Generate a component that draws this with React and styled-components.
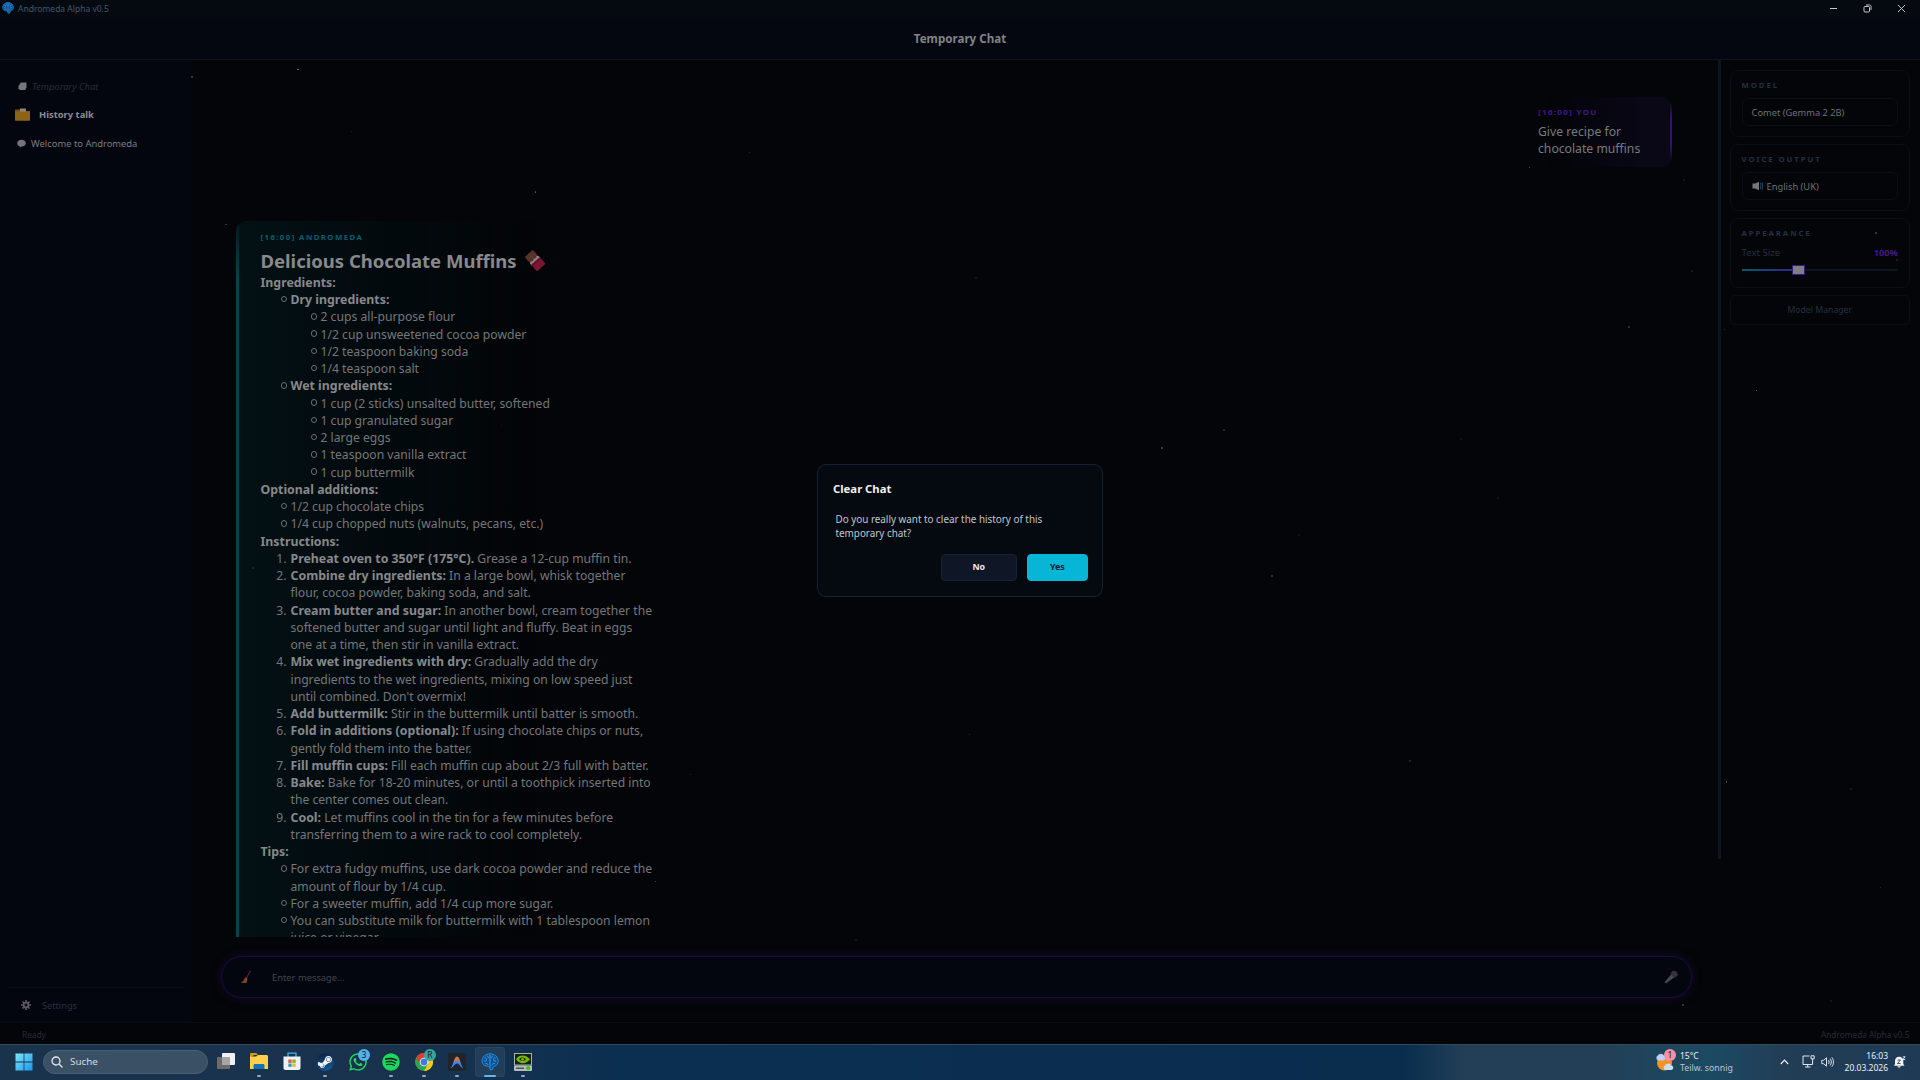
import React from "react";
import styled, { createGlobalStyle } from "styled-components";
import { FaWhatsapp, FaSpotify, FaSteamSymbol } from "react-icons/fa";

const GlobalStyle = createGlobalStyle`
  * {
    box-sizing: border-box;
  }
  body {
    margin: 0;
    background: #030508;
    font-family: "Noto Sans", "Open Sans", sans-serif;
    overflow: hidden;
  }
  svg {
    display: block;
    flex: none;
  }
`;

const Screen = styled.div`
  position: relative;
  width: 1920px;
  height: 1080px;
  display: flex;
  flex-direction: column;
  background: #030508;
  white-space: nowrap;
`;

// window title bar
const TitleBar = styled.div`
  height: 17px;
  display: flex;
  align-items: center;
  padding: 0 14px 1px 2px;
  gap: 4px;
  background: #050a11;
  color: #46546e;
  font-size: 8.5px;
`;

const WindowButtons = styled.div`
  margin-left: auto;
  display: flex;
  align-items: center;
  gap: 25px;
  color: #c6c8cb;
`;

const Header = styled.div`
  height: 43px;
  display: flex;
  align-items: center;
  justify-content: center;
  border-bottom: 1px solid #0b111d;
  background: #04070f;
  color: #808389;
  font-size: 11.6px;
  font-weight: 700;
`;

const Body = styled.div`
  flex: 1;
  min-height: 0;
  display: flex;
`;

// sidebar
const Sidebar = styled.div`
  width: 191px;
  display: flex;
  flex-direction: column;
  background: #04060f;
  padding: 12px 8px 0;
`;

const ChatItem = styled.div`
  height: 28.5px;
  display: flex;
  align-items: center;
  gap: ${(p) => p.$gap || 5}px;
  padding-left: ${(p) => p.$indent || 10}px;
  color: ${(p) => p.$color || "#7a7d81"};
  font-size: 9.4px;
  font-style: ${(p) => (p.$italic ? "italic" : "normal")};
  font-weight: ${(p) => (p.$bold ? 700 : 400)};
`;

const SidebarFooter = styled.div`
  margin-top: auto;
  height: 35px;
  display: flex;
  align-items: center;
  gap: 11px;
  padding-left: 13px;
  border-top: 1px solid #080e18;
  color: #253040;
  font-size: 9.2px;
`;

// chat
const ChatColumn = styled.div`
  flex: 1;
  min-width: 0;
  display: flex;
  flex-direction: column;
`;

const Messages = styled.div`
  height: 877px;
  overflow: hidden;
  display: flex;
  flex-direction: column;
  padding: 37px 46px 0 45px;
  gap: 54px;
`;

const UserBubble = styled.div`
  align-self: flex-end;
  flex: none;
  width: 156px;
  height: 70px;
  padding: 6px 22px;
  border-radius: 10px;
  background: linear-gradient(180deg, rgba(53, 19, 106, 0) 5%, #35136a 30%, #35136a 70%, rgba(53, 19, 106, 0) 92%)
      right / 2px 100% no-repeat,
    linear-gradient(90deg, rgba(11, 7, 24, 0) 20%, #0a0716 80%);
  color: #797b7e;
  font-size: 12.2px;
  line-height: 17.25px;
`;

const BotBubble = styled.div`
  flex: none;
  width: 440px;
  height: 760px;
  padding: 7px 0 0 24.5px;
  border-radius: 10px;
  background: linear-gradient(180deg, rgba(4, 70, 80, 0.15), #044650 60px) left / 3px 100% no-repeat,
    linear-gradient(90deg, #031114 0%, #030b0f 28%, rgba(3, 5, 8, 0) 68%);
  color: #757779;
  font-size: 12.16px;
  line-height: 17.25px;

  b {
    color: #86888b;
    font-weight: 700;
    font-size: 12.35px;
  }
`;

const Sender = styled.div`
  height: ${(p) => p.$height || 18}px;
  line-height: 18px;
  font-size: 7.8px;
  font-weight: 700;
  letter-spacing: 1.42px;
  color: ${(p) => p.$color};
`;

const RecipeTitle = styled.div`
  display: flex;
  align-items: center;
  gap: 8.5px;
  height: 27.8px;
  padding-top: 1px;
  font-size: 18.5px;
  font-weight: 700;
  color: #87898c;
`;

const Line = styled.div`
  display: flex;
  align-items: center;
  height: 17.25px;
  padding-left: ${(p) => p.$level * 30}px;
  white-space: pre;
`;

// marker hangs in the 30px indent of its line
const Marker = styled.span`
  width: 30px;
  margin-left: -30px;
  padding-right: ${(p) => (p.$number ? 4 : 3.5)}px;
  display: flex;
  justify-content: flex-end;
`;

const Ring = styled.span`
  width: 6.5px;
  height: 6.5px;
  margin-top: -1px;
  border: 1px solid #6c6e71;
  border-radius: 50%;
`;

const Composer = styled.div`
  height: 42px;
  margin: 18.5px 26px 0 30px;
  display: flex;
  align-items: center;
  padding: 1px 13.5px 0 18px;
  border: 1px solid #1c0b39;
  border-radius: 21px;
  background: #04060f;
  box-shadow: 0 0 10px 1px #150829;
  color: #414449;
  font-size: 9.35px;
  gap: 20px;

  svg:last-child {
    margin-left: auto;
  }
`;

const Splitter = styled.div`
  width: 3px;
  height: 799px;
  background: #0c1520;
`;

// settings panel
const Panel = styled.div`
  width: 199px;
  display: flex;
  flex-direction: column;
  gap: 7.5px;
  padding: 10px 10.5px 0 9px;
`;

const Card = styled.div`
  height: ${(p) => p.$height || 66.5}px;
  border: 1px solid #090f18;
  border-radius: 9px;
  padding: 6px 10.5px 0;
`;

const CardLabel = styled.div`
  height: 17px;
  line-height: 16px;
  color: #253042;
  font-size: 7.8px;
  font-weight: 700;
  letter-spacing: 1.9px;
`;

const Select = styled.div`
  height: 28px;
  margin-top: 3.5px;
  display: flex;
  align-items: center;
  gap: 4px;
  padding: 1px 9px 0;
  border: 1px solid #090f18;
  border-radius: 6px;
  color: #6f7175;
  font-size: 9.3px;
`;

const SliderRow = styled.div`
  display: flex;
  justify-content: space-between;
  align-items: center;
  height: 21px;
  color: #253041;
  font-size: 9.6px;
`;

const Percent = styled.span`
  color: #42198a;
  font-weight: 700;
  font-size: 9.3px;
`;

const Track = styled.div`
  display: flex;
  align-items: center;
  height: 12px;
  margin-top: 0.5px;
`;

const TrackFill = styled.div`
  width: 50px;
  height: 2px;
  background: linear-gradient(90deg, #04596a, #34268a);
`;

const Thumb = styled.div`
  width: 13px;
  height: 10px;
  border: 1px solid #3c1780;
  background: #7d7f82;
`;

const TrackRest = styled.div`
  flex: 1;
  height: 2px;
  background: #0c1420;
`;

const ManagerButton = styled.div`
  height: 30px;
  display: flex;
  align-items: center;
  justify-content: center;
  border: 1px solid #090f18;
  border-radius: 5px;
  color: #253041;
  font-size: 8.7px;
`;

const StatusBar = styled.div`
  height: 22px;
  display: flex;
  align-items: center;
  justify-content: space-between;
  padding: 1px 10.5px 0 22px;
  border-top: 1px solid #090d12;
  color: #232c3a;
  font-size: 8.3px;
`;

const Star = styled.div`
  position: absolute;
  left: ${(p) => p.$x}px;
  top: ${(p) => p.$y}px;
  width: 1.5px;
  height: 1.5px;
  border-radius: 50%;
  background: rgba(190, 195, 200, ${(p) => p.$a * 0.75});
`;

// dialog over the dimmed window
const Dialog = styled.div`
  position: absolute;
  left: 817px;
  top: 464px;
  width: 286px;
  height: 133px;
  display: flex;
  flex-direction: column;
  padding: 15px 14.5px 15px 15px;
  border: 1px solid #152136;
  border-radius: 9px;
  background: #050a11;
`;

const DialogTitle = styled.div`
  height: 18px;
  line-height: 18px;
  color: #eef0f3;
  font-size: 11.3px;
  font-weight: 700;
`;

const DialogText = styled.div`
  margin: 14px 0 0 2.5px;
  color: #c2c6cc;
  font-size: 9.87px;
  line-height: 14.3px;
`;

const DialogButtons = styled.div`
  display: flex;
  justify-content: flex-end;
  gap: 10.5px;
  margin-top: 13.4px;
`;

const DialogButton = styled.div`
  width: ${(p) => (p.$primary ? 60.5 : 75.5)}px;
  height: 27px;
  display: flex;
  align-items: center;
  justify-content: center;
  border: 1px solid ${(p) => (p.$primary ? "#07b5d6" : "#182235")};
  border-radius: 4px;
  background: ${(p) => (p.$primary ? "#07b5d6" : "#0f1626")};
  color: ${(p) => (p.$primary ? "#03202b" : "#e9ebef")};
  font-size: 8.8px;
  font-weight: 700;
`;

// windows taskbar
const Taskbar = styled.div`
  height: 36px;
  display: flex;
  align-items: center;
  padding: 0 14px 1.5px 15px;
  border-top: 1px solid #33485a;
  background: linear-gradient(
    90deg,
    #1a334d 0,
    #18324e 430px,
    #0b2f50 620px,
    #0a2d4e 1405px,
    #223f57 1465px,
    #223f57 1600px,
    #1b4a62 1710px,
    #223e57 1780px,
    #1f3a54 1920px
  );
`;

const SearchBox = styled.div`
  width: 165px;
  height: 24px;
  margin: 0 1px 0 10px;
  display: flex;
  align-items: center;
  gap: 7px;
  padding-left: 7px;
  border: 1px solid #4a5f73;
  border-radius: 12px;
  background: #3a5065;
  color: #d6dce2;
  font-size: 9.8px;
`;

const AppSlot = styled.div`
  position: relative;
  width: 33px;
  height: 34px;
  display: flex;
  align-items: center;
  justify-content: center;
`;

const ActiveTile = styled.div`
  width: 30px;
  height: 30px;
  display: flex;
  align-items: center;
  justify-content: center;
  border: 1px solid #29445e;
  border-radius: 3px;
  background: #213d58;
`;

const Running = styled.div`
  position: absolute;
  left: 50%;
  bottom: 2px;
  width: ${(p) => (p.$active ? 12 : 4)}px;
  height: 2px;
  transform: translateX(-50%);
  border-radius: 1px;
  background: ${(p) => (p.$active ? "#62b6f5" : "#9aa7b3")};
`;

const Badge = styled.div`
  position: absolute;
  right: ${(p) => p.$right}px;
  top: ${(p) => p.$top}px;
  width: 12px;
  height: 12px;
  border-radius: 50%;
  background: ${(p) => p.$color};
  color: #10202c;
  font-size: 8.5px;
  line-height: 12px;
  text-align: center;
`;

const Tray = styled.div`
  margin-left: auto;
  display: flex;
  align-items: center;
  color: #eef1f4;
  font-size: 8.5px;
  line-height: 12px;
`;

const Weather = styled.div`
  position: relative;
  display: flex;
  align-items: center;
  gap: 5px;
  width: 125px;
`;

const WeatherSub = styled.div`
  color: #b9c5cf;
  font-size: 8.75px;
`;

const TrayIcons = styled.div`
  display: flex;
  align-items: center;
  gap: 6px;
  width: 65px;

  svg:first-child {
    margin-right: 7px;
  }
`;

const Clock = styled.div`
  width: 43px;
  margin-right: 6px;
  display: flex;
  flex-direction: column;
  align-items: flex-end;
`;

const recipe = [
  { level: 0, bold: "Ingredients:" },
  { level: 1, mark: "o", bold: "Dry ingredients:" },
  { level: 2, mark: "o", text: "2 cups all-purpose flour" },
  { level: 2, mark: "o", text: "1/2 cup unsweetened cocoa powder" },
  { level: 2, mark: "o", text: "1/2 teaspoon baking soda" },
  { level: 2, mark: "o", text: "1/4 teaspoon salt" },
  { level: 1, mark: "o", bold: "Wet ingredients:" },
  { level: 2, mark: "o", text: "1 cup (2 sticks) unsalted butter, softened" },
  { level: 2, mark: "o", text: "1 cup granulated sugar" },
  { level: 2, mark: "o", text: "2 large eggs" },
  { level: 2, mark: "o", text: "1 teaspoon vanilla extract" },
  { level: 2, mark: "o", text: "1 cup buttermilk" },
  { level: 0, bold: "Optional additions:" },
  { level: 1, mark: "o", text: "1/2 cup chocolate chips" },
  { level: 1, mark: "o", text: "1/4 cup chopped nuts (walnuts, pecans, etc.)" },
  { level: 0, bold: "Instructions:" },
  { level: 1, mark: "1.", bold: "Preheat oven to 350°F (175°C).", text: " Grease a 12-cup muffin tin." },
  { level: 1, mark: "2.", bold: "Combine dry ingredients:", text: " In a large bowl, whisk together" },
  { level: 1, text: "flour, cocoa powder, baking soda, and salt." },
  { level: 1, mark: "3.", bold: "Cream butter and sugar:", text: " In another bowl, cream together the" },
  { level: 1, text: "softened butter and sugar until light and fluffy. Beat in eggs" },
  { level: 1, text: "one at a time, then stir in vanilla extract." },
  { level: 1, mark: "4.", bold: "Mix wet ingredients with dry:", text: " Gradually add the dry" },
  { level: 1, text: "ingredients to the wet ingredients, mixing on low speed just" },
  { level: 1, text: "until combined. Don't overmix!" },
  { level: 1, mark: "5.", bold: "Add buttermilk:", text: " Stir in the buttermilk until batter is smooth." },
  { level: 1, mark: "6.", bold: "Fold in additions (optional):", text: " If using chocolate chips or nuts," },
  { level: 1, text: "gently fold them into the batter." },
  { level: 1, mark: "7.", bold: "Fill muffin cups:", text: " Fill each muffin cup about 2/3 full with batter." },
  { level: 1, mark: "8.", bold: "Bake:", text: " Bake for 18-20 minutes, or until a toothpick inserted into" },
  { level: 1, text: "the center comes out clean." },
  { level: 1, mark: "9.", bold: "Cool:", text: " Let muffins cool in the tin for a few minutes before" },
  { level: 1, text: "transferring them to a wire rack to cool completely." },
  { level: 0, bold: "Tips:" },
  { level: 1, mark: "o", text: "For extra fudgy muffins, use dark cocoa powder and reduce the" },
  { level: 1, text: "amount of flour by 1/4 cup." },
  { level: 1, mark: "o", text: "For a sweeter muffin, add 1/4 cup more sugar." },
  { level: 1, mark: "o", text: "You can substitute milk for buttermilk with 1 tablespoon lemon" },
  { level: 1, text: "juice or vinegar." },
];

// x, y, opacity
const stars = [
  [297, 68.5, 0.8], [191, 76, 0.45], [350.5, 130.5, 0.25], [225, 223.5, 0.4],
  [534.5, 191, 0.6], [748.5, 151.5, 0.3], [1528.5, 166.5, 0.6], [1683, 179, 0.15],
  [1691, 270, 0.15], [1628, 326, 0.35], [1723.5, 328.5, 0.35], [1875, 232, 0.4],
  [1896, 259, 0.2], [1755.5, 389.5, 0.8], [1161, 447, 0.5], [1223, 429, 0.3],
  [1271, 575, 0.35], [968.5, 733.5, 0.3], [689.5, 773.5, 0.25], [654.5, 880.5, 0.6],
  [252, 567, 0.2], [500.5, 424.5, 0.2], [1725.5, 781, 0.5], [1850, 788, 0.15],
  [1879.5, 886.5, 0.3], [1682, 1004, 0.4], [1830, 1000, 0.12], [1460, 438, 0.12],
  [1497, 497, 0.12], [1409, 760, 0.25], [855, 939, 0.15], [975, 277, 0.15],
  [1298, 534, 0.12],
];

const BrainIcon = ({ size }) => (
  <svg width={size} height={size} viewBox="0 0 18 18">
    <path
      d="M9 .8C4.500.8 1 4 1 8c0 2.800 1.600 4.600 4 5 1.600.2 2.600.2 3.400 1.400L9.300 17l2.400-.5.5-2.800C15.300 13.200 17.200 11 17.200 8c0-4.200-3.700-7.200-8.200-7.200z"
      fill="#0e4f97"
      stroke="#1f8fd0"
      strokeWidth="1"
    />
    <path
      d="M9 1.500v13M3.500 5c1.200-.3 2 .3 2 1.500S4.500 8.500 3 8.300M5.800 3c1.300 0 1.700.8 1.500 2M4 11c1-.8 2.600-.6 3 .7M14.500 5c-1.200-.3-2 .3-2 1.500s1 2 2.500 1.800M12.200 3c-1.300 0-1.700.8-1.500 2M14 11c-1-.8-2.600-.6-3 .7"
      fill="none"
      stroke="#3fa9e6"
      strokeWidth="0.9"
    />
  </svg>
);

const BubbleIcon = ({ square }) => (
  <svg width="9" height="9" viewBox="0 0 9 9">
    {square ? (
      <path d="M2.800.6h4.700c.6 0 1 .4 1 1v3.800L7.200 8H2L.5 6.800V4z" fill="#77767d" />
    ) : (
      <path d="M4.500.8C7 .8 8.800 2.200 8.800 4.200S7 7.400 4.800 7.400L3 8.400l-.6-1.300C1 6.600.2 5.500.2 4.200.2 2.200 2 .8 4.500.8z" fill="#77727e" />
    )}
  </svg>
);

const FolderIcon = () => (
  <svg width="16" height="13" viewBox="0 0 16 13">
    <path d="M0 1.500h5L6 3h9v3H0z" fill="#7c4d0c" />
    <path d="M5 .5h6v4H5z" fill="#8a8880" />
    <path d="M0 3.500h15V12c0 .5-.3.8-.8.8H.8c-.5 0-.8-.3-.8-.8z" fill="#8c6417" />
  </svg>
);

const ChocolateIcon = () => (
  <svg width="20" height="21" viewBox="0 0 20 21">
    <g transform="rotate(-42 10 10.500)">
      <rect x="4.500" y="1" width="11" height="9" rx="1" fill="#553128" />
      <path d="M10 1v9M4.500 5.500h11" stroke="#66402f" strokeWidth=".6" />
      <path d="M4.200 9.500l2-1.200 2 1.200 2-1.200 2 1.200 2-1.200 1.600 1.200V12H4.200z" fill="#85838c" />
      <rect x="4.200" y="11" width="11.600" height="9" rx="1" fill="#7b1532" />
      <path d="M4.200 12.500h11.600" stroke="#5c0f26" strokeWidth="1" />
    </g>
  </svg>
);

const BroomIcon = () => (
  <svg width="12" height="14" viewBox="0 0 12 14">
    <path d="M10.500.8L6.500 8" stroke="#4d2a20" strokeWidth="1.200" />
    <path d="M5 7l2.400 1.400c.2 2-.6 3.900-1.200 4.600L.8 12.800C2.800 11.600 4.400 9.700 5 7z" fill="#7f4423" />
  </svg>
);

const MicIcon = () => (
  <svg width="14" height="14" viewBox="0 0 14 14">
    <path d="M.5 12.200L7 4.500l3 3L2 13.500z" fill="#4a474f" />
    <path d="M7.300 2.500L11.500 7c1.500-.4 2.200-1.500 2-3C13.200 2 11.800.7 10 .7c-1.300 0-2.300.7-2.700 1.800z" fill="#38353f" />
    <path d="M7 3.300L10.800 7.500" stroke="#625f67" strokeWidth="1" />
  </svg>
);

const GearIcon = () => (
  <svg width="10" height="10" viewBox="0 0 10 10">
    <path d="M5 0v10M0 5h10M1.500 1.500l7 7M8.500 1.500l-7 7" stroke="#5b5663" strokeWidth="1.700" />
    <circle cx="5" cy="5" r="2.400" fill="#04060f" stroke="#5b5663" strokeWidth="1.900" />
  </svg>
);

const SpeakerIcon = () => (
  <svg width="11" height="10" viewBox="0 0 11 10">
    <path d="M.5 2.500H3L7 .8v8.400L3 7.500H.5z" fill="#77757c" />
    <path d="M8.300 2c.8 1.800.8 4.200 0 6M9.800 1.200c1 2.200 1 5.400 0 7.600" stroke="#1d3f66" fill="none" strokeWidth="1.100" />
  </svg>
);

const WindowsIcon = () => (
  <svg width="18" height="18" viewBox="0 0 18 18">
    <defs>
      <linearGradient id="win" x1="0" y1="0" x2="1" y2="1">
        <stop offset="0" stopColor="#7ee6fb" />
        <stop offset="1" stopColor="#1b96ea" />
      </linearGradient>
    </defs>
    <path d="M.5.500h8.100v8.100H.5zM9.400.500h8.100v8.100H9.400zM.5 9.400h8.100v8.100H.5zM9.400 9.400h8.100v8.100H9.400z" fill="url(#win)" />
  </svg>
);

const TaskViewIcon = () => (
  <svg width="18" height="17" viewBox="0 0 18 17">
    <rect x="5" y="0" width="13" height="12" rx="1" fill="#f0f0f0" />
    <rect x="0" y="4" width="13" height="12" rx="1" fill="#6d6a67" />
    <rect x="5" y="4" width="8" height="8" fill="#a5a6a6" />
  </svg>
);

const ExplorerIcon = () => (
  <svg width="18" height="17" viewBox="0 0 18 17">
    <path d="M0 1.500C0 .6.500 0 1.300 0h5L8 2H4L0 5z" fill="#d9960f" />
    <path d="M0 3.500h6L8 2h8.500c.9 0 1.500.6 1.500 1.500V16H0z" fill="#fbd04a" />
    <path d="M3.500 16v-3.500c0-1 .6-1.500 1.500-1.500h8c1 0 1.500.6 1.500 1.500V16z" fill="#1470b8" />
  </svg>
);

const StoreIcon = () => (
  <svg width="18" height="19" viewBox="0 0 18 19">
    <path d="M5 5V1.200h8V5" fill="none" stroke="#3cb7ea" strokeWidth="1.300" />
    <path d="M.5 4.500h17V16c0 1.300-.9 2-2 2h-13c-1.200 0-2-.8-2-2z" fill="#eef2f5" />
    <path d="M5.300 7.500h3.400v3.400H5.300z" fill="#ee5a2c" />
    <path d="M9.300 7.500h3.400v3.400H9.300z" fill="#7cb92e" />
    <path d="M5.300 11.500h3.400v3.400H5.300z" fill="#1f9ee6" />
    <path d="M9.300 11.500h3.400v3.400H9.300z" fill="#fcb82a" />
  </svg>
);

const SteamDisc = styled.div`
  width: 18px;
  height: 18px;
  display: flex;
  align-items: center;
  justify-content: center;
  border-radius: 50%;
  background: linear-gradient(160deg, #101a3c, #15609c);
  color: #f2f5f7;
  font-size: 16px;
`;

const SpotifyDisc = styled.div`
  border-radius: 50%;
  background: #12281c;
  color: #1ed760;
  font-size: 18px;
`;

const ChromeIcon = () => (
  <svg width="18" height="18" viewBox="0 0 18 18">
    <circle cx="9" cy="9" r="9" fill="#32a350" />
    <path d="M1.200 4.500A9 9 0 0 1 16.800 4.500H9L5.100 11.200z" fill="#e33b2e" />
    <path d="M16.800 4.500A9 9 0 0 1 9 18l3.900-6.800L9 4.500z" fill="#fbc61c" />
    <circle cx="9" cy="9" r="4.300" fill="#f4f6f8" />
    <circle cx="9" cy="9" r="3.400" fill="#3a7de8" />
  </svg>
);

const ArcIcon = () => (
  <svg width="18" height="18" viewBox="0 0 18 18">
    <defs>
      <linearGradient id="arc" x1="0" y1="0" x2="0" y2="1">
        <stop offset="0" stopColor="#e8703a" />
        <stop offset=".3" stopColor="#c07a50" />
        <stop offset=".55" stopColor="#3b86f2" />
        <stop offset="1" stopColor="#3186ff" />
      </linearGradient>
    </defs>
    <rect width="18" height="18" fill="#20242b" />
    <path d="M2.800 15C5.500 12.500 5.800 3.500 9 3.500s3.500 9 6.200 11.500c-2.700 0-3.500-4.500-6.200-4.500S5.500 15 2.800 15z" fill="url(#arc)" />
  </svg>
);

const NvidiaIcon = () => (
  <svg width="18" height="18" viewBox="0 0 18 18">
    <rect width="18" height="12.500" fill="#a9b0a9" />
    <rect x="1" y="1" width="16" height="10.500" fill="#17230e" />
    <path d="M2 6.200C4.500 2.500 9 1.800 12.500 3.500c1.500.8 3 2 3.500 2.800C13 9.800 10 10.800 7 10 4.800 9.200 3 7.700 2 6.200z" fill="#78b810" />
    <path d="M5 6.200c1.500-2 5-2.400 7 .1-1.800 2.200-4.800 2-7-.1z" fill="#17230e" />
    <circle cx="8.600" cy="6.200" r="1.300" fill="#86c812" />
    <rect y="12.500" width="18" height="5.500" rx="1" fill="#b8bdb9" />
    <rect x="2" y="14.500" width="8" height="1.500" fill="#4c524e" />
    <circle cx="14.200" cy="15" r="2.200" fill="#47c51e" />
  </svg>
);

const WeatherIcon = () => (
  <svg width="20" height="18" viewBox="0 0 20 18">
    <circle cx="9.500" cy="10" r="7.500" fill="#f39322" />
    <path d="M3 7.500a2.800 2.800 0 0 1-.2-5A3.600 3.600 0 0 1 9 2.500c1.800.6 1.700 4.500-.5 5z" fill="#bcd0f4" />
    <path d="M10 17a2.500 2.500 0 0 1 0-4.500 3.400 3.400 0 0 1 6.200 0c2.800.2 2.800 4.200 0 4.500z" fill="#cbdcf8" />
  </svg>
);

const windowApps = [
  { icon: <TaskViewIcon /> },
  { icon: <ExplorerIcon />, running: true },
  { icon: <StoreIcon /> },
  { icon: <SteamDisc><FaSteamSymbol /></SteamDisc>, running: true },
  { icon: <FaWhatsapp size={20} color="#25d366" />, badge: "3", badgeColor: "#55aef2" },
  { icon: <SpotifyDisc><FaSpotify /></SpotifyDisc>, running: true },
  { icon: <ChromeIcon />, badge: "R", badgeColor: "#3aa59c", running: true },
  { icon: <ArcIcon />, running: true },
  { icon: <ActiveTile><BrainIcon size={18} /></ActiveTile>, running: true, active: true },
  { icon: <NvidiaIcon />, running: true },
];

function RecipeLine({ level, mark, bold, text }) {
  return (
    <Line $level={level}>
      {mark && <Marker $number={mark !== "o"}>{mark === "o" ? <Ring /> : mark}</Marker>}
      {bold && <b>{bold}</b>}
      {text}
    </Line>
  );
}

function SettingsPanel() {
  return (
    <Panel>
      <Card>
        <CardLabel>MODEL</CardLabel>
        <Select>Comet (Gemma 2 2B)</Select>
      </Card>
      <Card>
        <CardLabel>VOICE OUTPUT</CardLabel>
        <Select>
          <SpeakerIcon /> English (UK)
        </Select>
      </Card>
      <Card $height={69.5}>
        <CardLabel>APPEARANCE</CardLabel>
        <SliderRow>
          Text Size <Percent>100%</Percent>
        </SliderRow>
        <Track>
          <TrackFill />
          <Thumb />
          <TrackRest />
        </Track>
      </Card>
      <ManagerButton>Model Manager</ManagerButton>
    </Panel>
  );
}

function App() {
  return (
    <>
      <GlobalStyle />
      <Screen>
        <TitleBar>
          <BrainIcon size={12} />
          Andromeda Alpha v0.5
          <WindowButtons>
            <svg width="9" height="9" viewBox="0 0 9 9">
              <path d="M1 4.500h7" stroke="currentColor" />
            </svg>
            <svg width="9" height="9" viewBox="0 0 9 9" fill="none" stroke="currentColor">
              <rect x="1" y="2.500" width="5.500" height="5.500" rx="1" />
              <path d="M3 1h3.500C7.500 1 8 1.500 8 2.500V6" />
            </svg>
            <svg width="9" height="9" viewBox="0 0 9 9">
              <path d="M1 1l7 7M8 1L1 8" stroke="currentColor" />
            </svg>
          </WindowButtons>
        </TitleBar>
        <Header>Temporary Chat</Header>

        <Body>
          <Sidebar>
            <ChatItem $italic $color="#242d39"><BubbleIcon square />Temporary Chat</ChatItem>
            <ChatItem $bold $indent={7} $gap={8} $color="#8b8d91"><FolderIcon />History talk</ChatItem>
            <ChatItem $indent={9}><BubbleIcon />Welcome to Andromeda</ChatItem>
            <SidebarFooter><GearIcon />Settings</SidebarFooter>
          </Sidebar>

          <ChatColumn>
            <Messages>
              <UserBubble>
                <Sender $height={19.6} $color="#441886">[16:00] YOU</Sender>
                Give recipe for
                <br />
                chocolate muffins
              </UserBubble>
              <BotBubble>
                <Sender $color="#075f6e">[16:00] ANDROMEDA</Sender>
                <RecipeTitle>
                  Delicious Chocolate Muffins <ChocolateIcon />
                </RecipeTitle>
                {recipe.map((line, i) => (
                  <RecipeLine key={i} {...line} />
                ))}
              </BotBubble>
            </Messages>
            <Composer>
              <BroomIcon />
              Enter message...
              <MicIcon />
            </Composer>
          </ChatColumn>

          <Splitter />
          <SettingsPanel />
        </Body>

        <StatusBar>
          <span>Ready</span>
          <span>Andromeda Alpha v0.5</span>
        </StatusBar>

        <Taskbar>
          <WindowsIcon />
          <SearchBox>
            <svg width="12" height="12" viewBox="0 0 12 12" fill="none" stroke="#e3e8ec" strokeWidth="1.300">
              <circle cx="5" cy="5" r="4" />
              <path d="M8 8l3.500 3.500" />
            </svg>
            Suche
          </SearchBox>
          {windowApps.map((app, i) => (
            <AppSlot key={i}>
              {app.icon}
              {app.badge && <Badge $right={4} $top={4} $color={app.badgeColor}>{app.badge}</Badge>}
              {app.running && <Running $active={app.active} />}
            </AppSlot>
          ))}
          <Tray>
            <Weather>
              <WeatherIcon />
              <div>
                15°C
                <WeatherSub>Teilw. sonnig</WeatherSub>
              </div>
              <Badge $right={104} $top={-1} $color="#ff8f9c">1</Badge>
            </Weather>
            <TrayIcons>
              <svg width="9" height="6" viewBox="0 0 9 6" fill="none" stroke="#eef1f4" strokeWidth="1.200">
                <path d="M.8 5l3.700-3.800L8.200 5" />
              </svg>
              <svg width="13" height="13" viewBox="0 0 13 13" fill="none" stroke="#dfe5ea">
                <path d="M7.500 1H1v8.500h9.500V6.500M3 12h5.500M5.700 9.500V12M9 .8v3h3.200v-3zM10.600 4v4.500" />
              </svg>
              <svg width="13" height="12" viewBox="0 0 13 12" fill="none" stroke="#dfe5ea">
                <path d="M.8 4.300h1.700L5.500 1.800v8.400l-3-2.500H.8zM7.500 4c.8 1.200.8 2.800 0 4M9.200 2.600c1.500 2 1.500 4.800 0 6.800M10.800 1.300c2.200 2.600 2.200 6.800 0 9.400" />
              </svg>
            </TrayIcons>
            <Clock>
              <span>16:03</span>
              <span>20.03.2026</span>
            </Clock>
            <svg width="12" height="12" viewBox="0 0 12 12">
              <path d="M5 .8C7.800.8 9.300 2.500 9.300 4.800V8l1.200 1.800H0L1 8V4.800C1 2.500 2.500.8 5 .8zM3.300 10.300h3.600c-.3 1.700-3.300 1.700-3.600 0z" fill="#f1f3f5" />
              <path d="M3.500 4h3L3.500 7.500h3" stroke="#28425a" strokeWidth=".9" fill="none" />
              <path d="M8.800.8h2.400L8.800 3.500h2.400" stroke="#f1f3f5" strokeWidth=".9" fill="none" />
            </svg>
          </Tray>
        </Taskbar>

        {stars.map(([x, y, a], i) => (
          <Star key={i} $x={x} $y={y} $a={a} />
        ))}

        <Dialog>
          <DialogTitle>Clear Chat</DialogTitle>
          <DialogText>
            Do you really want to clear the history of this
            <br />
            temporary chat?
          </DialogText>
          <DialogButtons>
            <DialogButton>No</DialogButton>
            <DialogButton $primary>Yes</DialogButton>
          </DialogButtons>
        </Dialog>
      </Screen>
    </>
  );
}

export default App;
